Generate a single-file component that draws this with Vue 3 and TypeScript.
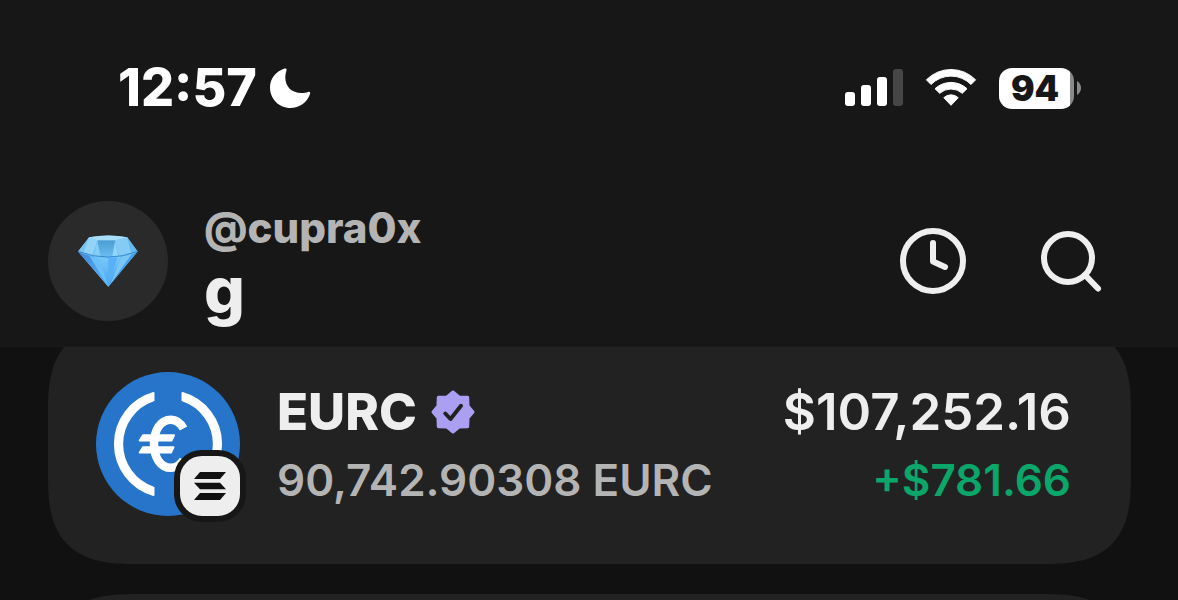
<script setup lang="ts">
interface Token {
  symbol: string
  amount: string
  value: string
  change: string
}

const profile = { handle: '@cupra0x', name: 'g' }
const status = { time: '12:57', battery: 94 }
const token: Token = {
  symbol: 'EURC',
  amount: '90,742.90308 EURC',
  value: '$107,252.16',
  change: '+$781.66',
}
</script>

<template>
  <div class="screen">
    <header class="top">
      <div class="status">
        <div class="clock">
          <time>{{ status.time }}</time>
          <svg class="moon" viewBox="0 0 42 42" aria-hidden="true">
            <path d="M15 1.8C7 4.5 1 11.5 1 20.5C1 32 10 41 21.5 41C30 41 38.3 35.5 41 27C41.6 25.4 40.8 24.5 39.2 25C37.2 25.7 34.8 26 32.5 26C22.5 26 16.3 19.5 16.3 10.5C16.3 8 16.8 5.5 17.5 3.4C18 1.8 16.8 1.2 15 1.8Z" fill="#fff" />
          </svg>
        </div>
        <div class="indicators">
          <svg class="signal" viewBox="0 0 58 38" aria-hidden="true">
            <g fill="#fff">
              <rect x="0" y="23" width="10" height="14" rx="3" />
              <rect x="16" y="16" width="10" height="21" rx="3" />
              <rect x="32" y="8" width="10" height="29" rx="3" />
            </g>
            <rect x="48" y="0" width="10" height="37" rx="3" fill="#464646" />
          </svg>
          <svg class="wifi" viewBox="0 0 52 38" aria-hidden="true">
            <g fill="#fff" stroke="#fff" stroke-width="1" stroke-linejoin="round">
              <path d="M1.4 10.8A34.5 34.5 0 0 1 50.6 10.8L46 15.5A28 28 0 0 0 6 15.5Z" />
              <path d="M10 19.7A23.5 23.5 0 0 1 42 19.7L37.3 24.3A17 17 0 0 0 14.7 24.3Z" />
              <path d="M18.8 28.7A10.5 10.5 0 0 1 33.2 28.7L26 36.3Z" />
            </g>
          </svg>
          <div class="battery">
            <span class="level">{{ status.battery }}</span>
            <svg class="cap" viewBox="0 0 4 14" aria-hidden="true">
              <path d="M0 0C2.400 1.400 4 4 4 7S2.400 12.600 0 14Z" fill="#8a8a8a" />
            </svg>
          </div>
        </div>
      </div>

      <div class="account">
        <div class="avatar">
          <svg class="gem" viewBox="108 130 190 166" aria-hidden="true">
            <defs>
              <linearGradient id="gem-left" x1="0" y1="0" x2="1" y2="1">
                <stop offset="0" stop-color="#3f87d8" />
                <stop offset="1" stop-color="#5bb5f5" />
              </linearGradient>
              <linearGradient id="gem-mid" x1="0" y1="0" x2="0" y2="1">
                <stop offset="0" stop-color="#7cc9f9" />
                <stop offset="1" stop-color="#45a4f2" />
              </linearGradient>
              <linearGradient id="gem-top" x1="0" y1="0" x2="0" y2="1">
                <stop offset="0" stop-color="#4b9cd2" />
                <stop offset="1" stop-color="#6cbef1" />
              </linearGradient>
            </defs>
            <path d="M111 184L145 140Q204 129 262 140L294 184L204 292Z" fill="#72c2f5" />
            <path d="M111 184L145 140L172 149L154 196Z" fill="#76c3ef" />
            <path d="M145 140L172 149L154 196L128 186Z" fill="#93d3f7" />
            <path d="M170 149H225L232 199Q200 205 160 197Z" fill="url(#gem-top)" />
            <path d="M170 149L160 197L180 199Z" fill="#83cff8" />
            <path d="M225 149L216 200L234 198Z" fill="#91d5fa" />
            <path d="M225 149L262 140L294 184L236 198Z" fill="#67b8ed" />
            <path d="M225 149L262 140L274 188L236 198Z" fill="#84cbf6" />
            <path d="M145 140Q204 129 262 140L225 149H170Z" fill="#a9def8" />
            <path d="M111 184Q132 196 160 199L204 292Z" fill="url(#gem-left)" />
            <path d="M160 199Q200 207 243 199L204 292Z" fill="url(#gem-mid)" />
            <path d="M243 199Q276 195 294 184L204 292Z" fill="#489fe7" />
            <path d="M146 198L204 292L176 203Z" fill="#6cc0f8" />
            <path d="M204 204L204 292L232 202Z" fill="#58b0f5" />
            <path d="M243 199L276 191L211 283Z" fill="#7ac7f6" />
            <path d="M112 184Q204 218 293 184" fill="none" stroke="#3487cc" stroke-width="3" />
          </svg>
        </div>
        <div class="names">
          <span class="handle">{{ profile.handle }}</span>
          <h1 class="name">{{ profile.name }}</h1>
        </div>
        <nav class="actions">
          <button type="button" aria-label="Activity">
            <svg viewBox="0 0 72 72" fill="none" stroke="#eee" stroke-width="6" stroke-linecap="round" stroke-linejoin="round">
              <circle cx="36" cy="36" r="30" />
              <path d="M36 18V36.500L48 42" />
            </svg>
          </button>
          <button type="button" aria-label="Search">
            <svg viewBox="0 0 72 72" fill="none" stroke="#eee" stroke-width="6">
              <circle cx="33" cy="33" r="24" />
              <path d="M50 50L63 63.500" stroke-linecap="round" />
            </svg>
          </button>
        </nav>
      </div>
    </header>

    <main class="list">
      <article class="card">
        <div class="logo">
          <svg class="coin" viewBox="0 0 144 144" aria-hidden="true">
            <circle cx="72" cy="72" r="72" fill="#2775ca" />
            <g fill="#fff" stroke="#fff" stroke-width="2" stroke-linejoin="round">
              <path d="M57.500 21A53 53 0 0 0 57.500 123V115.600A46 46 0 0 1 57.500 28.400Z" />
              <path d="M86.500 21A53 53 0 0 1 86.500 123V115.600A46 46 0 0 0 86.500 28.400Z" />
              <path d="M47 63.300H78L75.500 68.500H43.700Z" />
              <path d="M47 75.300H77.500L75 80.500H43.700Z" />
            </g>
            <path d="M87.500 56.500C84.500 51 80.500 47.700 75 47.700C64.500 47.700 58 58 58 71.800S64.500 95.800 75 95.800C80.500 95.800 84.500 93 87.500 88" fill="none" stroke="#fff" stroke-width="8.500" />
          </svg>
          <span class="chain">
            <svg viewBox="0 0 60 60" role="img" aria-label="Solana">
              <g fill="#111">
                <path d="M20 16H46L40 23H14Z" />
                <path d="M14 26.700H40L46 33.300H20Z" />
                <path d="M20 37H46L40 44H14Z" />
              </g>
            </svg>
          </span>
        </div>
        <div class="info">
          <h2 class="symbol">
            {{ token.symbol }}
            <svg class="verified" viewBox="0 0 44 44" role="img" aria-label="Verified">
              <polygon points="22,2 28,7 36.700,7.300 37,16 42,22 37,28 36.700,36.700 28,37 22,42 16,37 7.300,36.700 7,28 2,22 7,16 7.300,7.300 16,7" fill="#ab9ff2" stroke="#ab9ff2" stroke-width="3" stroke-linejoin="round" />
              <path d="M14.300 23.500L19.500 29L30 15.800" fill="none" stroke="#222" stroke-width="4" stroke-linecap="round" stroke-linejoin="round" />
            </svg>
          </h2>
          <span class="amount">{{ token.amount }}</span>
        </div>
        <div class="worth">
          <span class="value">{{ token.value }}</span>
          <span class="change">{{ token.change }}</span>
        </div>
      </article>
      <article class="card"></article>
    </main>
  </div>
</template>

<style>
body {
  background: #111;
}
</style>

<style scoped>
.screen {
  height: 100vh;
  overflow: hidden;
  background: #111;
  color: #eee;
  font-family: Inter, "Liberation Sans", sans-serif;
}

svg {
  display: block;
}

.top {
  position: relative;
  z-index: 1;
  background: #171717;
  box-shadow: 0 1px 0 #1b1b1b;
}

.status {
  display: flex;
  align-items: center;
  justify-content: space-between;
  height: 176px;
  padding: 0 97px 0 118px;
  color: #fff;
}

.clock {
  display: flex;
  align-items: center;
  gap: 12px;
  font-size: 52px;
  font-weight: 800;
  line-height: 60px;
}

.moon {
  width: 42px;
  height: 42px;
}

.indicators {
  display: flex;
  align-items: center;
  gap: 22px;
}

.signal {
  width: 58px;
  height: 38px;
}

.wifi {
  width: 52px;
  height: 38px;
}

.battery {
  display: flex;
  align-items: center;
  gap: 3px;
}

.level {
  box-sizing: border-box;
  width: 75px;
  border-radius: 13px;
  padding-right: 3px;
  background: linear-gradient(to right, #fff 71px, #8a8a8a 71px);
  color: #171717;
  font-size: 35px;
  font-weight: 900;
  line-height: 41px;
  text-align: center;
}

.cap {
  width: 4px;
  height: 14px;
}

.account {
  display: flex;
  align-items: center;
  height: 170px;
  padding: 0 71px 0 48px;
}

.avatar {
  display: grid;
  place-items: center;
  width: 120px;
  height: 120px;
  border-radius: 50%;
  background: #2a2a2a;
}

.gem {
  width: 62px;
  height: 54px;
}

.names {
  display: flex;
  flex: 1;
  flex-direction: column;
  min-width: 0;
  margin-left: 36px;
  padding-bottom: 4px;
}

.handle {
  color: #b4b4b4;
  font-size: 42px;
  font-weight: 800;
  line-height: 62px;
}

.name {
  margin: 0;
  font-size: 64px;
  font-weight: 800;
  line-height: 62px;
}

.actions {
  display: flex;
  gap: 66px;
}

.actions button {
  width: 72px;
  height: 72px;
  border: 0;
  padding: 0;
  background: none;
  cursor: pointer;
}

.list {
  display: flex;
  flex-direction: column;
  gap: 30px;
  margin-top: -22px;
  padding: 0 47px 0 48px;
}

.card {
  box-sizing: border-box;
  display: flex;
  flex: none;
  min-height: 240px;
  border-radius: 90px;
  corner-shape: superellipse(1.5);
  padding: 48px 60px 48px 48px;
  background: #222;
}

.logo {
  position: relative;
  width: 144px;
  height: 144px;
}

.coin {
  width: 144px;
  height: 144px;
}

.chain {
  position: absolute;
  right: -6px;
  bottom: -6px;
  width: 60px;
  height: 60px;
  border: 6px solid #171717;
  border-radius: 28px;
  background: #eee;
}

.info,
.worth {
  display: flex;
  flex-direction: column;
  padding-top: 6px;
  line-height: 68px;
}

.info {
  flex: 1;
  margin-left: 37px;
}

.symbol {
  display: flex;
  align-items: center;
  gap: 14px;
  margin: 0;
  font-size: 51px;
  font-weight: 800;
}

.verified {
  width: 44px;
  height: 44px;
}

.amount {
  color: #b4b4b4;
  font-size: 44px;
  font-weight: 600;
}

.worth {
  text-align: right;
}

.value {
  font-size: 51px;
  font-weight: 600;
}

.change {
  color: #0aa66a;
  font-size: 44px;
  font-weight: 600;
}
</style>
